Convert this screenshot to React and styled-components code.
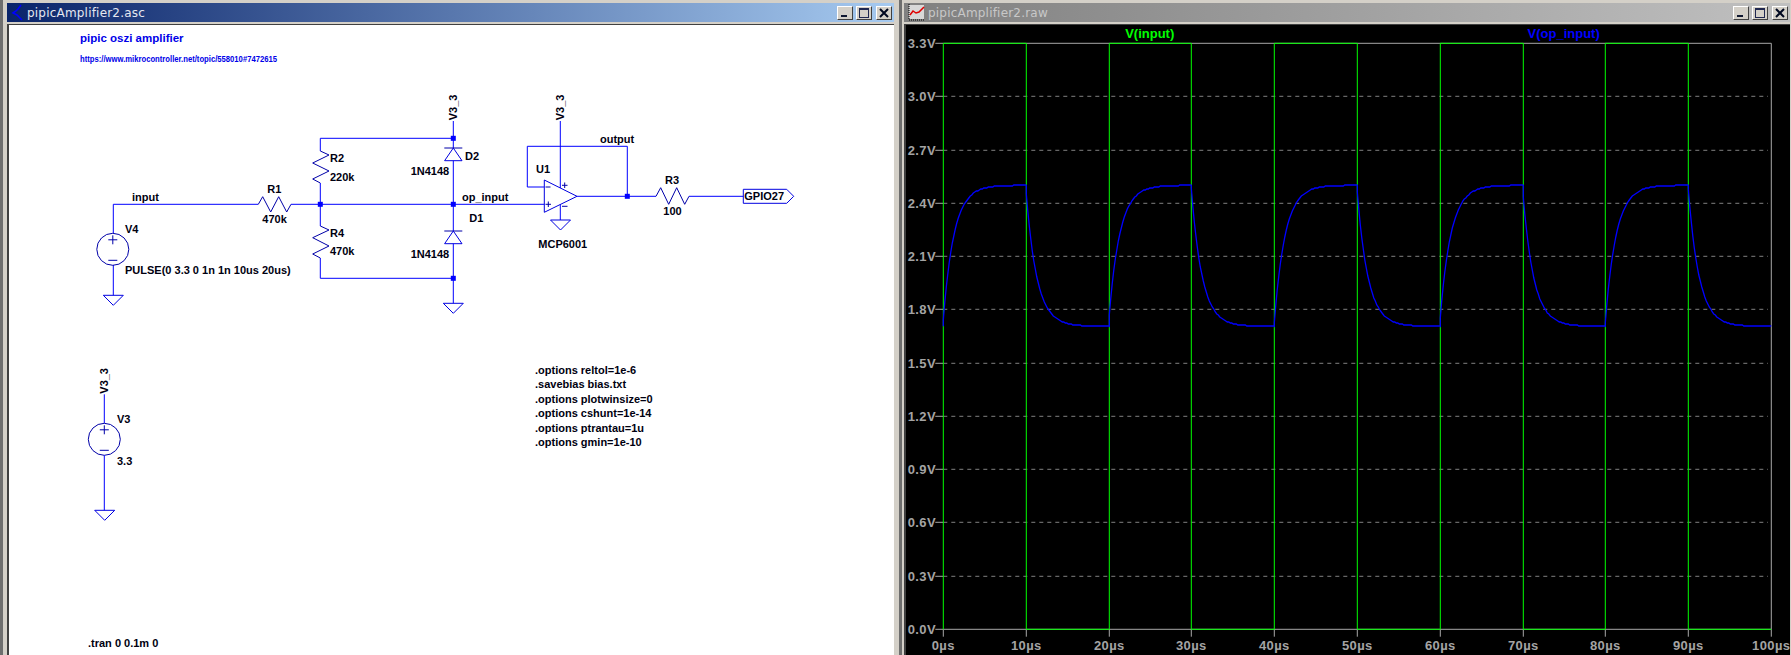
import React from 'react';
import styled, { createGlobalStyle } from 'styled-components';

const GlobalStyle = createGlobalStyle`
  html, body {
    margin: 0;
    padding: 0;
    background: #808080;
    overflow: hidden;
  }
`;

const Desktop = styled.div`
  width: 1791px;
  height: 655px;
  display: flex;
  background: #d4d0c8;
`;

const Window = styled.div`
  width: ${(p) => p.$width}px;
  height: 655px;
  box-sizing: border-box;
  padding: 3px ${(p) => p.$right}px 0 ${(p) => p.$left}px;
  display: flex;
  flex-direction: column;
  background: #d4d0c8;
  border-left: 3px solid #6e6e6e;
`;

const TitleBar = styled.div`
  height: 19px;
  flex: none;
  display: flex;
  align-items: center;
  gap: 3px;
  padding: 0 2px 0 4px;
  background: ${(p) =>
    p.$active
      ? 'linear-gradient(90deg, #0a246a, #a6caf0)'
      : 'linear-gradient(90deg, #808080, #c0c0c0)'};
`;

const TitleText = styled.span`
  flex: 1;
  font: 400 12px "DejaVu Sans", sans-serif;
  letter-spacing: 0.2px;
  color: ${(p) => (p.$active ? '#e6e8f0' : '#c8c8c8')};
  white-space: nowrap;
`;

const WinButton = styled.div`
  width: 16px;
  height: 14px;
  box-sizing: border-box;
  margin-left: ${(p) => p.$gap || 0}px;
  display: flex;
  align-items: center;
  justify-content: center;
  background: #d4d0c8;
  border: 1px solid;
  border-color: #fff #404040 #404040 #fff;
`;

const Body = styled.div`
  flex: 1;
  margin-top: 2px;
  border-top: 1px solid #404040;
  border-left: 2px solid #404040;
  background: ${(p) => p.$bg};
  min-height: 0;
`;

const Drawing = styled.svg`
  display: block;
`;

const Wire = styled.polyline`
  fill: none;
  stroke: #0000ff;
  stroke-width: 1;
`;

const Symbol = styled.polyline`
  fill: none;
  stroke: #0000a8;
  stroke-width: 1;
`;

const SymbolFill = styled.polygon`
  fill: none;
  stroke: #0000e0;
  stroke-width: 1;
`;

const Ring = styled.circle`
  fill: none;
  stroke: #0000a8;
  stroke-width: 1;
`;

const Dot = styled.rect`
  fill: #0000ff;
`;

const Label = styled.text`
  font: 700 11px "Liberation Sans", Arial, sans-serif;
  fill: ${(p) => p.$color || '#000010'};
`;

const AxisLabel = styled.text`
  font: 700 13px "Liberation Sans", Arial, sans-serif;
  letter-spacing: 0.4px;
  fill: #a4a4a4;
  text-anchor: ${(p) => p.$anchor || 'start'};
`;

const TraceName = styled.text`
  font: 700 13px "Liberation Sans", Arial, sans-serif;
  fill: ${(p) => p.$color};
  text-anchor: middle;
`;

const GridLine = styled.line`
  stroke: #808080;
  stroke-width: 1;
  stroke-dasharray: 4 4;
`;

const AxisLine = styled.line`
  stroke: ${(p) => p.$color || '#a8a8a8'};
  stroke-width: 1;
`;

const Trace = styled.polyline`
  fill: none;
  stroke: #0000ff;
  stroke-width: 1.3;
`;

const Resistor = ({ d }) => <Symbol points={d} />;

const Ground = ({ x, y }) => (
  <SymbolFill points={`${x - 10},${y} ${x + 10},${y} ${x},${y + 10}`} />
);

const Junction = ({ x, y }) => <Dot x={x - 2.5} y={y - 2.5} width={5} height={5} />;

const Source = ({ x, y }) => (
  <>
    <Ring cx={x} cy={y} r={16} />
    <Symbol points={`${x - 4.5},${y - 9.5} ${x + 4.5},${y - 9.5}`} />
    <Symbol points={`${x},${y - 14} ${x},${y - 5}`} />
    <Symbol points={`${x - 4.5},${y + 11} ${x + 4.5},${y + 11}`} />
  </>
);

const Diode = ({ x, y }) => (
  <>
    <Symbol points={`${x - 9},${y} ${x + 9},${y}`} />
    <SymbolFill points={`${x},${y} ${x - 8.7},${y + 12.7} ${x + 8.7},${y + 12.7}`} />
  </>
);

const Vertical = ({ x, y, children }) => (
  <Label transform={`rotate(-90 ${x} ${y})`} x={x} y={y}>{children}</Label>
);

const Schematic = () => (
  <Drawing width="884" height="631" viewBox="9 24 884 631">
    <Label x="80" y="41" $color="#0000e8" style={{ fontSize: 11.5 }}>pipic oszi amplifier</Label>
    <Label x="80" y="61" $color="#0000e8" textLength="197" lengthAdjust="spacingAndGlyphs" style={{ fontSize: 8.5 }}>
      https://www.mikrocontroller.net/topic/558010#7472615
    </Label>

    <Wire points="113.3,232 113.3,203.3 258.3,203.3" />
    <Wire points="113.3,264 113.3,294.3" />
    <Source x={112.8} y={248.3} />
    <Ground x={113.3} y={294.3} />

    <Resistor d="258.3,203.3 262.7,195.7 270.7,211 278.7,195.7 286.7,211 291,203.3" />
    <Wire points="291,203.3 544.3,203.3" />

    <Wire points="320.3,150 320.3,137.3 453.3,137.3" />
    <Resistor d="320.3,150 329,154 312.7,162 329,170 312.7,178 320.3,182" />
    <Wire points="320.3,182 320.3,225" />
    <Resistor d="320.3,225 329,229 312.7,236.7 329,245 312.7,253 320.3,257" />
    <Wire points="320.3,257 320.3,277.3 453.3,277.3" />
    <Junction x={320.3} y={203.3} />

    <Wire points="453.3,120 453.3,147" />
    <Diode x={453.3} y={147} />
    <Wire points="453.3,159.7 453.3,230" />
    <Diode x={453.3} y={230} />
    <Wire points="453.3,242.7 453.3,302.3" />
    <Junction x={453.3} y={137.3} />
    <Junction x={453.3} y={203.3} />
    <Junction x={453.3} y={277.3} />
    <Ground x={453.3} y={302.3} />

    <SymbolFill points="544.3,179 544.3,211.3 577,195.3" />
    <Wire points="560.3,120 560.3,187" />
    <Wire points="560.3,203.5 560.3,219" />
    <Ground x={560.5} y={219} />
    <Wire points="544.3,186 527.3,186 527.3,145.3 627.3,145.3 627.3,195.3" />
    <Symbol points="545.5,186 550.5,186" />
    <Symbol points="545.5,203.3 551,203.3" />
    <Symbol points="548.3,200.5 548.3,206" />
    <Symbol points="562,184.3 567.5,184.3" />
    <Symbol points="564.7,181.5 564.7,187" />
    <Symbol points="562,205.3 567.5,205.3" />
    <Wire points="577,195.3 656,195.3" />
    <Junction x={627.3} y={195.3} />
    <Resistor d="656,195.3 660.7,186.7 668.7,203.3 676.7,186.7 684.7,203.3 689,195.3" />
    <Wire points="689,195.3 743.3,195.3" />
    <SymbolFill points="743.3,188.3 786.7,188.3 793.7,195.3 786.7,202.3 743.3,202.3" />

    <Wire points="104.3,393.3 104.3,422.3" />
    <Source x={104.3} y={438.3} />
    <Wire points="104.3,454.3 104.3,509.3" />
    <Ground x={104.7} y={509.3} />

    <Label x="132" y="200">input</Label>
    <Label x="267.3" y="192.3">R1</Label>
    <Label x="262.3" y="222">470k</Label>
    <Label x="125" y="231.7">V4</Label>
    <Label x="125" y="273">PULSE(0 3.3 0 1n 1n 10us 20us)</Label>
    <Label x="330" y="161">R2</Label>
    <Label x="330" y="180">220k</Label>
    <Label x="330" y="236">R4</Label>
    <Label x="330" y="254">470k</Label>
    <Label x="410.7" y="174">1N4148</Label>
    <Label x="410.7" y="257">1N4148</Label>
    <Label x="465" y="159">D2</Label>
    <Label x="469.3" y="221">D1</Label>
    <Label x="462" y="200">op_input</Label>
    <Label x="600" y="142.3">output</Label>
    <Label x="536" y="172">U1</Label>
    <Label x="538.3" y="247">MCP6001</Label>
    <Label x="665" y="183">R3</Label>
    <Label x="663.3" y="214">100</Label>
    <Label x="744.3" y="199">GPIO27</Label>
    <Vertical x={457.3} y={119.3}>V3_3</Vertical>
    <Vertical x={564.3} y={119.3}>V3_3</Vertical>
    <Vertical x={108.3} y={392.7}>V3_3</Vertical>
    <Label x="117" y="421.7">V3</Label>
    <Label x="117" y="464">3.3</Label>
    <Label x="88" y="645.7">.tran 0 0.1m 0</Label>

    <Label x="535" y="373.3">.options reltol=1e-6</Label>
    <Label x="535" y="387.3">.savebias bias.txt</Label>
    <Label x="535" y="402.3">.options plotwinsize=0</Label>
    <Label x="535" y="416.3">.options cshunt=1e-14</Label>
    <Label x="535" y="431.3">.options ptrantau=1u</Label>
    <Label x="535" y="445.3">.options gmin=1e-10</Label>
  </Drawing>
);

const PLOT = { left: 941.3, right: 1769.3, top: 42.3, bottom: 628.3 };
const HIGH = 184.3;
const LOW = 325.3;
const TAU = 10.7;

const xTicks = [941.3, 1024.3, 1107.3, 1189.3, 1272.3, 1355.3, 1438.3, 1521.3, 1603.3, 1686.3, 1769.3];
const yTicks = [
  ['3.3V', 42.3], ['3.0V', 95.3], ['2.7V', 149.3], ['2.4V', 202.3], ['2.1V', 255.3], ['1.8V', 308.3],
  ['1.5V', 362.3], ['1.2V', 415.3], ['0.9V', 468.3], ['0.6V', 521.3], ['0.3V', 575.3], ['0.0V', 628.3],
];

// y where the trace lands right after each edge (the op amp input jumps a bit)
const edgeStart = [319, 192.7, 314, 187, 322, 190.7, 316.7, 195.7, 322, 187.7];

const buildTrace = () => {
  const pts = [[PLOT.left, LOW]];
  for (let i = 0; i < 10; i += 1) {
    const x0 = xTicks[i];
    const x1 = xTicks[i + 1];
    const rising = i % 2 === 0;
    const target = rising ? HIGH : LOW;
    const from = edgeStart[i];
    for (let x = x0; x <= x1; x += 1.5) {
      const y = target + (from - target) * Math.exp(-(x - x0) / TAU);
      pts.push([x, Math.round(y)]);
    }
    pts.push([x1, target]);
  }
  return pts.map((p) => p.join(',')).join(' ');
};

const tracePoints = buildTrace();

const Plot = () => (
  <Drawing width="886" height="631" viewBox="904 24 886 631">
    <TraceName x="1147.7" y="37.3" $color="#00ff00">V(input)</TraceName>
    <TraceName x="1561.7" y="37.3" $color="#0000ff">V(op_input)</TraceName>

    {yTicks.map(([text, y]) => (
      <g key={text}>
        <AxisLine x1="933.3" x2={PLOT.left} y1={y} y2={y} />
        <AxisLabel x="905.7" y={y + 4.6}>{text}</AxisLabel>
        {y !== PLOT.top && y !== PLOT.bottom && (
          <GridLine x1={PLOT.left} x2="1766" y1={y} y2={y} />
        )}
      </g>
    ))}

    <AxisLine x1={PLOT.left} x2={PLOT.right} y1={PLOT.top} y2={PLOT.top} />
    <AxisLine x1={PLOT.left} x2={PLOT.right} y1={PLOT.bottom} y2={PLOT.bottom} />
    <AxisLine x1={PLOT.right} x2={PLOT.right} y1={PLOT.top} y2={PLOT.bottom} />

    {xTicks.map((x, i) => (
      <g key={x}>
        <AxisLine x1={x} x2={x} y1={PLOT.bottom} y2="635.7" />
        <AxisLabel x={x} y="649.3" $anchor="middle">{i * 10}µs</AxisLabel>
      </g>
    ))}

    {xTicks.slice(0, 10).map((x, i) => (
      <AxisLine key={x} $color="#00ff00" x1={x} x2={x} y1={PLOT.top} y2={PLOT.bottom} />
    ))}
    {xTicks.slice(0, 10).map((x, i) => {
      const y = i % 2 === 0 ? PLOT.top : PLOT.bottom;
      return <AxisLine key={x} $color="#00ff00" x1={x} x2={xTicks[i + 1]} y1={y} y2={y} />;
    })}

    <Trace points={tracePoints} />
  </Drawing>
);

const SpiceIcon = () => (
  <svg width="13" height="17" viewBox="0 0 13 17">
    <path d="M10 1 L7 5 L5 7 L2 9 L6 11 L8 13 L11 16" fill="none" stroke="#0000ff" strokeWidth="1.6" />
  </svg>
);

const WaveIcon = () => (
  <svg width="17" height="17" viewBox="0 0 17 17">
    <rect x="1" y="1" width="15" height="14" fill="#d8d8d8" />
    <path d="M1 0 V16 H17" fill="none" stroke="#000" strokeWidth="1" strokeDasharray="1 1" />
    <path d="M2 11 L5 7 L8 9 L11 8 L16 3" fill="none" stroke="#e00000" strokeWidth="1.5" />
  </svg>
);

const MinGlyph = () => (
  <svg width="10" height="10" viewBox="0 0 10 10"><rect x="1" y="7" width="6" height="2" fill="#101830" /></svg>
);

const MaxGlyph = () => (
  <svg width="12" height="10" viewBox="0 0 12 10">
    <rect x="1.5" y="0.5" width="9" height="9" fill="none" stroke="#202850" />
    <rect x="1" y="0" width="10" height="2" fill="#202850" />
  </svg>
);

const CloseGlyph = () => (
  <svg width="10" height="10" viewBox="0 0 10 10">
    <path d="M1 1 L9 9 M9 1 L1 9" stroke="#000820" strokeWidth="2" />
  </svg>
);

const Buttons = () => (
  <>
    <WinButton><MinGlyph /></WinButton>
    <WinButton><MaxGlyph /></WinButton>
    <WinButton $gap={1}><CloseGlyph /></WinButton>
  </>
);

const App = () => (
  <Desktop>
    <GlobalStyle />
    <Window $width={899} $left={4} $right={5}>
      <TitleBar $active>
        <SpiceIcon />
        <TitleText $active>pipicAmplifier2.asc</TitleText>
        <Buttons />
      </TitleBar>
      <Body $bg="#ffffff"><Schematic /></Body>
    </Window>
    <Window $width={892} $left={2} $right={1}>
      <TitleBar>
        <WaveIcon />
        <TitleText>pipicAmplifier2.raw</TitleText>
        <Buttons />
      </TitleBar>
      <Body $bg="#000000"><Plot /></Body>
    </Window>
  </Desktop>
);

export default App;
